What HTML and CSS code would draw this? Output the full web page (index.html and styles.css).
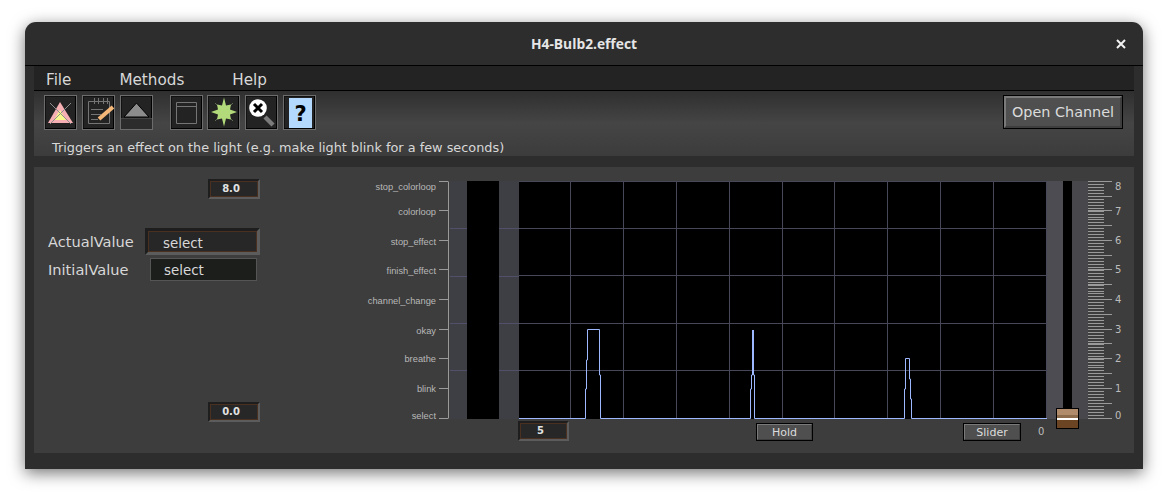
FILE: index.html
```html
<!DOCTYPE html>
<html lang="en">
<head>
  <meta charset="UTF-8">
  <title>H4-Bulb2.effect</title>
  <link rel="stylesheet" href="styles.css">
</head>
<body>
  <div class="window">
    <div class="titlebar">
      <span></span>
      <span class="title">H4-Bulb2.effect</span>
      <svg class="close" width="10" height="10" viewBox="0 0 10 10"><path d="M1 1L9 9M9 1L1 9"/></svg>
    </div>

    <div class="content">
      <div class="menubar">
        <span>File</span>
        <span>Methods</span>
        <span>Help</span>
      </div>

      <div class="toolbar">
        <div class="tools">
          <div class="tool">
            <svg viewBox="0 0 31 33">
              <path d="M15 6L28 27H3Z" fill="#f6b0b4"/>
              <path d="M15 14L21 24H9Z" fill="#f8f88c"/>
              <path d="M5 7L26 28M26 7L5 28" stroke="#8c8c8c" stroke-width="1" fill="none"/>
            </svg>
          </div>
          <div class="tool">
            <svg viewBox="0 0 31 33">
              <path d="M5.5 5.5H26.5V27.5H5.5Z M8 13.5H20M8 18.5H18M8 23.5H15 M11.5 2V8M15.5 2V8M20.5 2V8M24.5 2V8" stroke="#757575" fill="none"/>
              <path d="M16 23L30 11" stroke="#f5b878" stroke-width="4" fill="none"/>
            </svg>
          </div>
          <div class="tool">
            <svg viewBox="0 0 31 33">
              <rect x="0" y="22" width="31" height="11" fill="#2c2c2c"/>
              <path d="M15.5 7L28 21H3Z" fill="#8c8c8c" stroke="#000"/>
              <path d="M0 22.5H31" stroke="#444"/>
            </svg>
          </div>
          <div class="tool group-start">
            <svg viewBox="0 0 31 33">
              <path d="M5.5 6.5H25.5V27.5H5.5Z M5.5 10.5H25.5" stroke="#757575" fill="none"/>
            </svg>
          </div>
          <div class="tool">
            <svg viewBox="0 0 31 33">
              <path d="M7 7L25 25M25 7L7 25" stroke="#5f6b50" stroke-width="1"/>
              <path d="M16 1.5L18 9.5L23 8.5L22 13.5L29 16L22 18.5L23 23.5L18 22.5L16 30.5L14 22.5L9 23.5L10 18.5L3 16L10 13.5L9 8.5L14 9.5Z" fill="#b2da7a"/>
            </svg>
          </div>
          <div class="tool">
            <svg viewBox="0 0 31 33">
              <path d="M19 21L27 29" stroke="#7b7b7b" stroke-width="4.5"/>
              <circle cx="12" cy="12" r="8.8" fill="#fff"/>
              <path d="M8 8L16 16M16 8L8 16" stroke="#000" stroke-width="3"/>
            </svg>
          </div>
          <div class="tool">
            <svg viewBox="0 0 31 33">
              <rect x="5" y="2" width="23" height="30" fill="#b3d9ff"/>
              <text x="16.5" y="25" class="help-mark">?</text>
            </svg>
          </div>
          <button class="open-channel">Open Channel</button>
        </div>
        <div class="status">Triggers an effect on the light (e.g. make light blink for a few seconds)</div>
      </div>

      <div class="panel">
        <div class="values">
          <div class="num-box">8.0</div>
          <div class="row actual-row">
            <span class="actual-label">ActualValue</span>
            <div class="select-box">select</div>
          </div>
          <div class="row initial-row">
            <span class="initial-label">InitialValue</span>
            <div class="select-plain">select</div>
          </div>
          <div class="num-box bottom">0.0</div>
        </div>

        <div class="graph">
          <svg class="plot" width="765" height="245" viewBox="360 175 765 245">
            <!-- y axis -->
            <path class="axis" d="M448.5 181.5V418.5M439 181.5H448M439 210.5H448M439 240.5H448M439 269.5H448M439 299.5H448M439 329.5H448M439 358.5H448M439 388.5H448M439 418.5H448"/>
            <text class="tick" x="436" y="190">stop_colorloop</text>
            <text class="tick" x="436" y="215">colorloop</text>
            <text class="tick" x="436" y="245">stop_effect</text>
            <text class="tick" x="436" y="274">finish_effect</text>
            <text class="tick" x="436" y="304">channel_change</text>
            <text class="tick" x="436" y="334">okay</text>
            <text class="tick" x="436" y="362">breathe</text>
            <text class="tick" x="436" y="392">blink</text>
            <text class="tick" x="436" y="419">select</text>

            <!-- strips and plot area -->
            <rect x="450" y="181" width="69" height="238" fill="#3e3e45"/>
            <rect x="467" y="181" width="32" height="238" fill="#000"/>
            <rect x="519" y="181" width="528" height="238" fill="#000"/>
            <path class="grid-h" d="M450 228.5H467M450 276.5H467M450 323.5H467M450 370.5H467M499 228.5H519M499 276.5H519M499 323.5H519M499 370.5H519"/>
            <path class="grid" d="M519 181.5H1046M519 228.5H1046M519 275.5H1046M519 323.5H1046M519 370.5H1046M570.5 181V418M623.5 181V418M676.5 181V418M729.5 181V418M782.5 181V418M834.5 181V418M887.5 181V418M940.5 181V418M993.5 181V418M1046.5 181V418"/>
            <path class="trace" d="M519 418.5H585.5V389H586.5V360H587.5V329.5H599.5V375H600.5V418.5H750.5V389H751.5V375H752.5V330M753.5 330V375H754.5V418.5H904.5V389H905.5V358.5H909.5V379H910.5V399H911.5V418.5H1047"/>

            <!-- slider -->
            <rect x="1047" y="181" width="41" height="238" fill="#4c4c52"/>
            <rect x="1072" y="181" width="16" height="238" fill="#47474c"/>
            <rect x="1063" y="181" width="9" height="238" fill="#000"/>

            <!-- ruler -->
            <line class="ruler-minor" x1="1096" y1="181" x2="1096" y2="419"/>
            <path class="axis" d="M1088 181.5H1112M1088 196.5H1112M1088 210.5H1112M1088 225.5H1112M1088 240.5H1112M1088 255.5H1112M1088 269.5H1112M1088 284.5H1112M1088 299.5H1112M1088 314.5H1112M1088 329.5H1112M1088 343.5H1112M1088 358.5H1112M1088 373.5H1112M1088 388.5H1112M1088 403.5H1112M1088 418.5H1112"/>
            <text class="ruler-num" x="1115" y="190">8</text>
            <text class="ruler-num" x="1115" y="215">7</text>
            <text class="ruler-num" x="1115" y="244">6</text>
            <text class="ruler-num" x="1115" y="273">5</text>
            <text class="ruler-num" x="1115" y="303">4</text>
            <text class="ruler-num" x="1115" y="333">3</text>
            <text class="ruler-num" x="1115" y="362">2</text>
            <text class="ruler-num" x="1115" y="392">1</text>
            <text class="ruler-num" x="1115" y="419">0</text>

            <!-- slider thumb -->
            <rect x="1056.5" y="408.5" width="22" height="20" fill="#6b4523" stroke="#000"/>
            <rect x="1057" y="409" width="21" height="6" fill="#b08c6c"/>
            <rect x="1057" y="415" width="21" height="3" fill="#8c6c4c"/>
            <rect x="1057" y="418" width="21" height="2" fill="#fff"/>
          </svg>
          <div class="graph-controls">
            <div class="num-box wide">5</div>
            <button class="small-btn hold">Hold</button>
            <button class="small-btn slider">Slider</button>
            <span class="zero">0</span>
          </div>
        </div>
      </div>
    </div>
  </div>
</body>
</html>
```

FILE: styles.css
```css
html {
  background: #fff;
}
body {
  margin: 0;
  padding: 22px 25px 28px;
  font-family: "DejaVu Sans", sans-serif;
  color: #d8d8d8;
}
.window {
  width: 1118px;
  height: 447px;
  display: flex;
  flex-direction: column;
  background: #2d2d2d;
  border-radius: 11px 11px 0 0;
  box-shadow: 0 4px 16px rgba(0, 0, 0, 0.55);
}
.titlebar {
  height: 43px;
  flex: none;
  display: grid;
  grid-template-columns: 1fr auto 1fr;
  align-items: center;
  border-bottom: 1px solid #000;
}
.title {
  font-family: "Open Sans", sans-serif;
  font-size: 13.8px;
  font-weight: 700;
  color: #e6e6e6;
}
.close {
  justify-self: end;
  margin-right: 17px;
  stroke: #f2f2f2;
  stroke-width: 2;
}
.content {
  padding: 0 9px;
}
.menubar {
  height: 20px;
  padding: 4px 0 0 12px;
  display: flex;
  gap: 48px;
  align-items: center;
  background: #232323;
  border-bottom: 1px solid #000;
  font-size: 15.2px;
}
.toolbar {
  height: 65px;
  box-sizing: border-box;
  padding: 4px 11px 0 10px;
  background: linear-gradient(#2f2f2f, #454545 50%, #3c3c3c);
}
.tools {
  display: flex;
  gap: 5px;
  align-items: flex-start;
}
.tool {
  width: 33px;
  height: 35px;
  box-sizing: border-box;
  border: 1px solid #6c6c6c;
  background: #232323;
  box-shadow: inset -1px -1px 0 #000, inset 1px 1px 0 #111;
}
.tool svg {
  display: block;
  width: 31px;
  height: 33px;
}
.group-start {
  margin: 0 -1px 0 12px;
}
.help-mark {
  font-family: "DejaVu Sans", sans-serif;
  font-size: 21px;
  font-weight: 700;
  text-anchor: middle;
  fill: #000;
}
.open-channel {
  margin-left: auto;
  width: 120px;
  height: 34px;
  padding: 0;
  font-family: "DejaVu Sans", sans-serif;
  font-size: 14.4px;
  color: #dcdcdc;
  background: #4f4f4f;
  border: 3px solid;
  border-color: #7a7a7a #3e3e3e #3e3e3e #7a7a7a;
  outline: 1px solid #000;
  outline-offset: -1px;
}
.status {
  margin: 10px 0 0 8px;
  font-size: 12.85px;
  line-height: 16px;
  color: #d8d8d8;
}
.panel {
  margin-top: 11px;
  height: 286px;
  display: flex;
  background: #3d3d3d;
}
.values {
  width: 226px;
  box-sizing: border-box;
  padding: 12px 0 31px 14px;
  display: flex;
  flex-direction: column;
  font-size: 14.6px;
}
.num-box {
  align-self: flex-end;
  width: 52px;
  height: 20px;
  box-sizing: border-box;
  padding-right: 6px;
  border: 2px solid;
  border-color: #1e1e1e #5c5c5c #5c5c5c #1e1e1e;
  outline: 1px solid #4a3020;
  outline-offset: -3px;
  background: #272727;
  font-size: 10px;
  font-weight: 700;
  line-height: 16px;
  text-align: center;
  color: #e2e2e2;
}
.num-box.bottom {
  margin-top: auto;
}
.row {
  display: flex;
  align-items: center;
}
.actual-row {
  margin-top: 29px;
  height: 27px;
}
.actual-label {
  width: 98px;
}
.initial-row {
  margin-top: 3px;
  height: 23px;
}
.initial-label {
  width: 102px;
}
.select-box {
  width: 116px;
  height: 27px;
  box-sizing: border-box;
  border: 3px solid;
  border-color: #1e1e1e #5c5c5c #5c5c5c #1e1e1e;
  outline: 1px solid #4a3020;
  outline-offset: -4px;
  background: #272727;
  padding-left: 15px;
  font-size: 13.4px;
  line-height: 25px;
}
.select-plain {
  width: 107px;
  height: 23px;
  box-sizing: border-box;
  border: 1px solid #555;
  background: #1c1e1c;
  padding-left: 13px;
  font-size: 13.4px;
  line-height: 24px;
}
.graph {
  margin: 8px 0 0 100px;
}
.plot {
  display: block;
  overflow: visible;
}
.axis {
  stroke: #9a9a9a;
  fill: none;
}
.tick {
  font-family: "Liberation Sans", sans-serif;
  font-size: 9.3px;
  fill: #b8b8b8;
  text-anchor: end;
}
.grid-h {
  stroke: #50506a;
  fill: none;
}
.grid {
  stroke: #47475a;
  fill: none;
}
.trace {
  stroke: #9db8ff;
  fill: none;
}
.ruler-minor {
  stroke: #9a9a9a;
  stroke-width: 16;
  stroke-dasharray: 1 1.96;
  shape-rendering: crispEdges;
}
.ruler-num {
  font-size: 10px;
  fill: #bcbcbc;
}
.graph-controls {
  display: flex;
  align-items: flex-start;
  padding: 1px 0 0 158px;
}
.num-box.wide {
  align-self: flex-start;
  width: 51px;
}
.small-btn {
  margin-top: 2px;
  height: 18px;
  padding: 0;
  font-family: "DejaVu Sans", sans-serif;
  font-size: 11px;
  color: #dcdcdc;
  background: #4f4f4f;
  border: 2px solid;
  border-color: #7a7a7a #3e3e3e #3e3e3e #7a7a7a;
  outline: 1px solid #000;
  outline-offset: -1px;
}
.hold {
  width: 57px;
  margin-left: 187px;
}
.slider {
  width: 58px;
  margin-left: 150px;
}
.zero {
  margin: 5px 0 0 17px;
  font-size: 10px;
  line-height: 12px;
  color: #bcbcbc;
}
```
